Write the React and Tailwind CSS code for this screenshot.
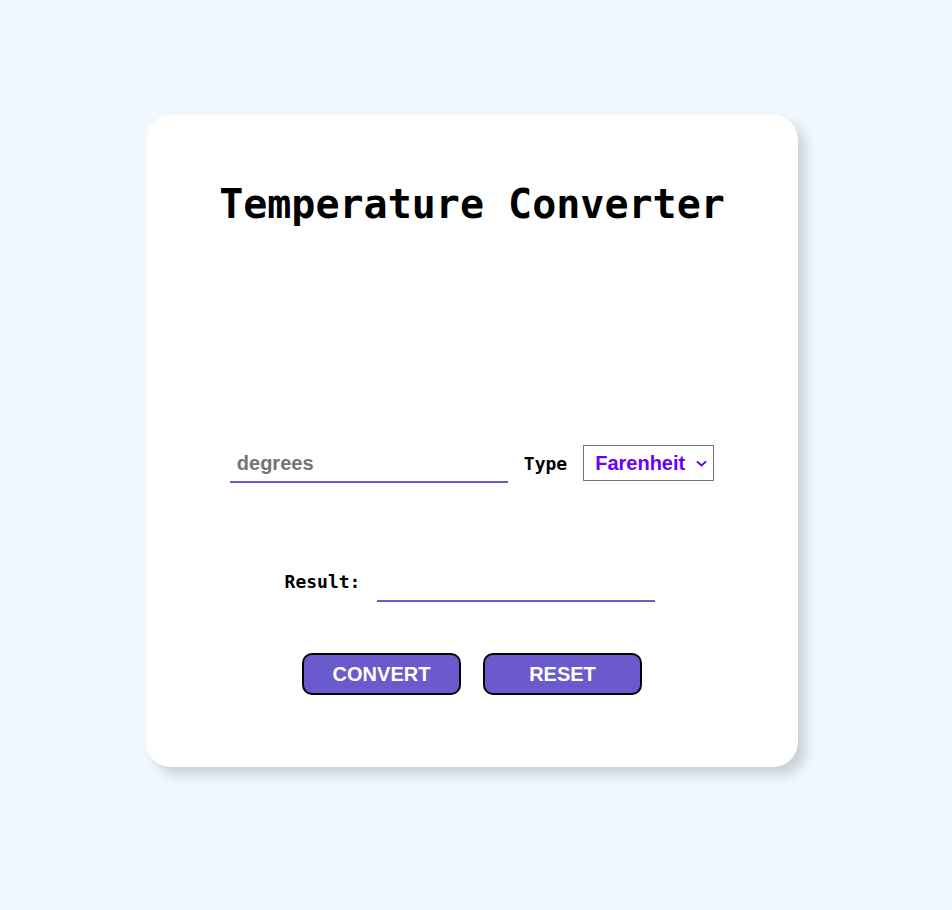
import React, { useState } from "react";

export default function App() {
  const [deg, setDeg] = useState("");
  const [type, setType] = useState("F");
  const [result, setResult] = useState("");

  const convert = () => {
    const v = parseFloat(deg);
    if (isNaN(v)) return setResult("");
    if (type === "F") setResult(((v - 32) * 5 / 9).toFixed(2) + " °C");
    else setResult((v * 9 / 5 + 32).toFixed(2) + " °F");
  };

  return (
    <div className="min-h-screen bg-[#f0f8ff] pt-[115px] pr-2 flex justify-center items-start">
      <div className="w-[652px] h-[652px] bg-white rounded-[25px] shadow-[8px_8px_12px_rgba(0,0,0,0.16)] flex flex-col items-center pt-[66px]">
        <h1 className="font-['DejaVu_Sans_Mono',monospace] font-bold text-[40px] leading-[47px] text-black">
          Temperature Converter
        </h1>

        <div className="mt-[215px] flex items-center h-10">
          <input
            value={deg}
            onChange={(e) => setDeg(e.target.value)}
            placeholder="degrees"
            className="w-[278px] h-10 pl-[7px] pt-[2px] border-b-2 border-[#6a5acd] outline-none font-['Liberation_Sans',Arial,sans-serif] font-bold text-[20px] text-black placeholder:text-[#757575]"
          />
          <span className="ml-4 font-['DejaVu_Sans_Mono',monospace] font-bold text-[18px] text-black">
            Type
          </span>
          <div className="ml-4 relative w-[131px] h-9">
            <select
              value={type}
              onChange={(e) => setType(e.target.value)}
              className="appearance-none w-full h-full border border-[#767676] bg-white pl-[11px] font-['Liberation_Sans',Arial,sans-serif] font-bold text-[20px] text-[#6a00f4] outline-none"
            >
              <option value="F">Farenheit</option>
              <option value="C">Celsius</option>
            </select>
            <svg
              className="absolute right-[7px] top-[15px] pointer-events-none"
              width="11"
              height="7"
              viewBox="0 0 11 7"
              fill="none"
            >
              <path d="M1 1.5 L5.5 5.5 L10 1.5" stroke="#6a00f4" strokeWidth="1.8" />
            </svg>
          </div>
        </div>

        <div className="mt-[78px] mr-1 flex items-center h-10">
          <span className="font-['DejaVu_Sans_Mono',monospace] font-bold text-[18px] text-black">
            Result:
          </span>
          <input
            readOnly
            value={result}
            className="ml-[17px] w-[278px] h-[41px] mt-[1px] pl-[7px] border-b-2 border-[#6a5acd] outline-none font-['Liberation_Sans',Arial,sans-serif] font-bold text-[20px] text-black"
          />
        </div>

        <div className="mt-[52px] flex gap-[22px]">
          <button
            onClick={convert}
            className="w-[159px] h-[42px] bg-[#6a5acd] border-2 border-black rounded-[10px] text-white font-['Liberation_Sans',Arial,sans-serif] font-bold text-[20px]"
          >
            CONVERT
          </button>
          <button
            onClick={() => {
              setDeg("");
              setResult("");
            }}
            className="w-[159px] h-[42px] bg-[#6a5acd] border-2 border-black rounded-[10px] text-white font-['Liberation_Sans',Arial,sans-serif] font-bold text-[20px]"
          >
            RESET
          </button>
        </div>
      </div>
    </div>
  );
}
